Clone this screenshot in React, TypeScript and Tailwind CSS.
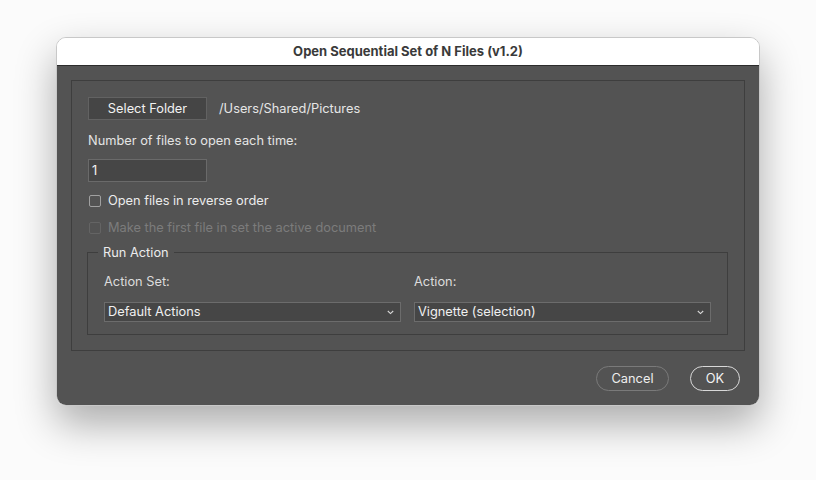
import React from 'react';

const font = { fontFamily: 'Inter, "Liberation Sans", sans-serif' };

const Chevron = () => (
  <svg width="7" height="5" viewBox="0 0 7 5" className="shrink-0">
    <path d="M0.8 1 L3.5 3.6 L6.2 1" fill="none" stroke="#d8d8d8" strokeWidth="1.1" />
  </svg>
);

const Checkbox = ({ label, disabled }: { label: string; disabled?: boolean }) => (
  <div className="flex items-center h-[14px] pl-[1px]">
    <span
      className={`w-[12px] h-[12px] rounded-[2px] border ${
        disabled ? 'border-[#646464]' : 'border-[#a0a0a0]'
      }`}
    />
    <span className={`ml-[7px] ${disabled ? 'text-[#7c7c7c]' : 'text-[#ececec]'}`}>{label}</span>
  </div>
);

const Select = ({ value }: { value: string }) => (
  <div className="flex-1 h-[20px] flex items-center justify-between pl-[3px] pr-[6px] bg-[#464646] border border-[#6c6c6c] text-[#f0f0f0]">
    <span>{value}</span>
    <Chevron />
  </div>
);

export default function App() {
  return (
    <div className="w-[816px] h-[480px] bg-[#fbfbfb] pt-[37px] pl-[56px]" style={font}>
      <div className="w-[704px] h-[369px] rounded-[10px] overflow-hidden flex flex-col border border-[#c8c8c8] shadow-[0_18px_40px_rgba(0,0,0,0.32)] text-[12.8px]">
        {/* title bar */}
        <div className="h-[28px] shrink-0 bg-white border-b border-[#2c2c2c] flex items-center justify-center">
          <span className="font-bold text-[#3a3a3a] text-[13px]">Open Sequential Set of N Files (v1.2)</span>
        </div>

        {/* body */}
        <div className="flex-1 bg-[#535353] flex flex-col px-[14px] pt-[14px]">
          <div className="border border-[#3e3e3e] px-[16px] pt-[16px] pb-[15px] flex flex-col">
            <div className="flex items-center">
              <div className="w-[119px] h-[23px] bg-[#454545] border border-[#626262] flex items-center justify-center text-[#f2f2f2]">
                Select Folder
              </div>
              <span className="ml-[12px] text-[#e6e6e6]">/Users/Shared/Pictures</span>
            </div>

            <div className="mt-[12px] text-[#e4e4e4] leading-[18px]">Number of files to open each time:</div>

            <div className="mt-[9px] w-[119px] h-[23px] bg-[#464646] border border-[#6a6a6a] flex items-center pl-[3px] text-[#f4f4f4]">
              1
            </div>

            <div className="mt-[12px]">
              <Checkbox label="Open files in reverse order" />
            </div>
            <div className="mt-[13px]">
              <Checkbox label="Make the first file in set the active document" disabled />
            </div>

            {/* Run Action group */}
            <div className="relative mt-[17px] -ml-[1px] border border-[#3e3e3e] px-[16px] pt-[20px] pb-[12px]">
              <span className="absolute -top-[9px] left-[10px] px-[5px] bg-[#535353] text-[#ececec] leading-[18px]">
                Run Action
              </span>
              <div className="flex gap-[13px]">
                <div className="flex-1 flex flex-col">
                  <span className="text-[#dcdcdc] leading-[18px]">Action Set:</span>
                  <div className="mt-[11px] flex">
                    <Select value="Default Actions" />
                  </div>
                </div>
                <div className="flex-1 flex flex-col">
                  <span className="text-[#dcdcdc] leading-[18px]">Action:</span>
                  <div className="mt-[11px] flex">
                    <Select value="Vignette (selection)" />
                  </div>
                </div>
              </div>
            </div>
          </div>

          {/* footer buttons */}
          <div className="flex justify-end items-center mt-[15px] pr-[5px] gap-[21px]">
            <div className="w-[73px] h-[25px] rounded-full border border-[#7a7a7a] flex items-center justify-center text-[#eeeeee]">
              Cancel
            </div>
            <div className="w-[50px] h-[25px] rounded-full border border-[#d8d8d8] flex items-center justify-center text-[#f4f4f4]">
              OK
            </div>
          </div>
        </div>
      </div>
    </div>
  );
}
